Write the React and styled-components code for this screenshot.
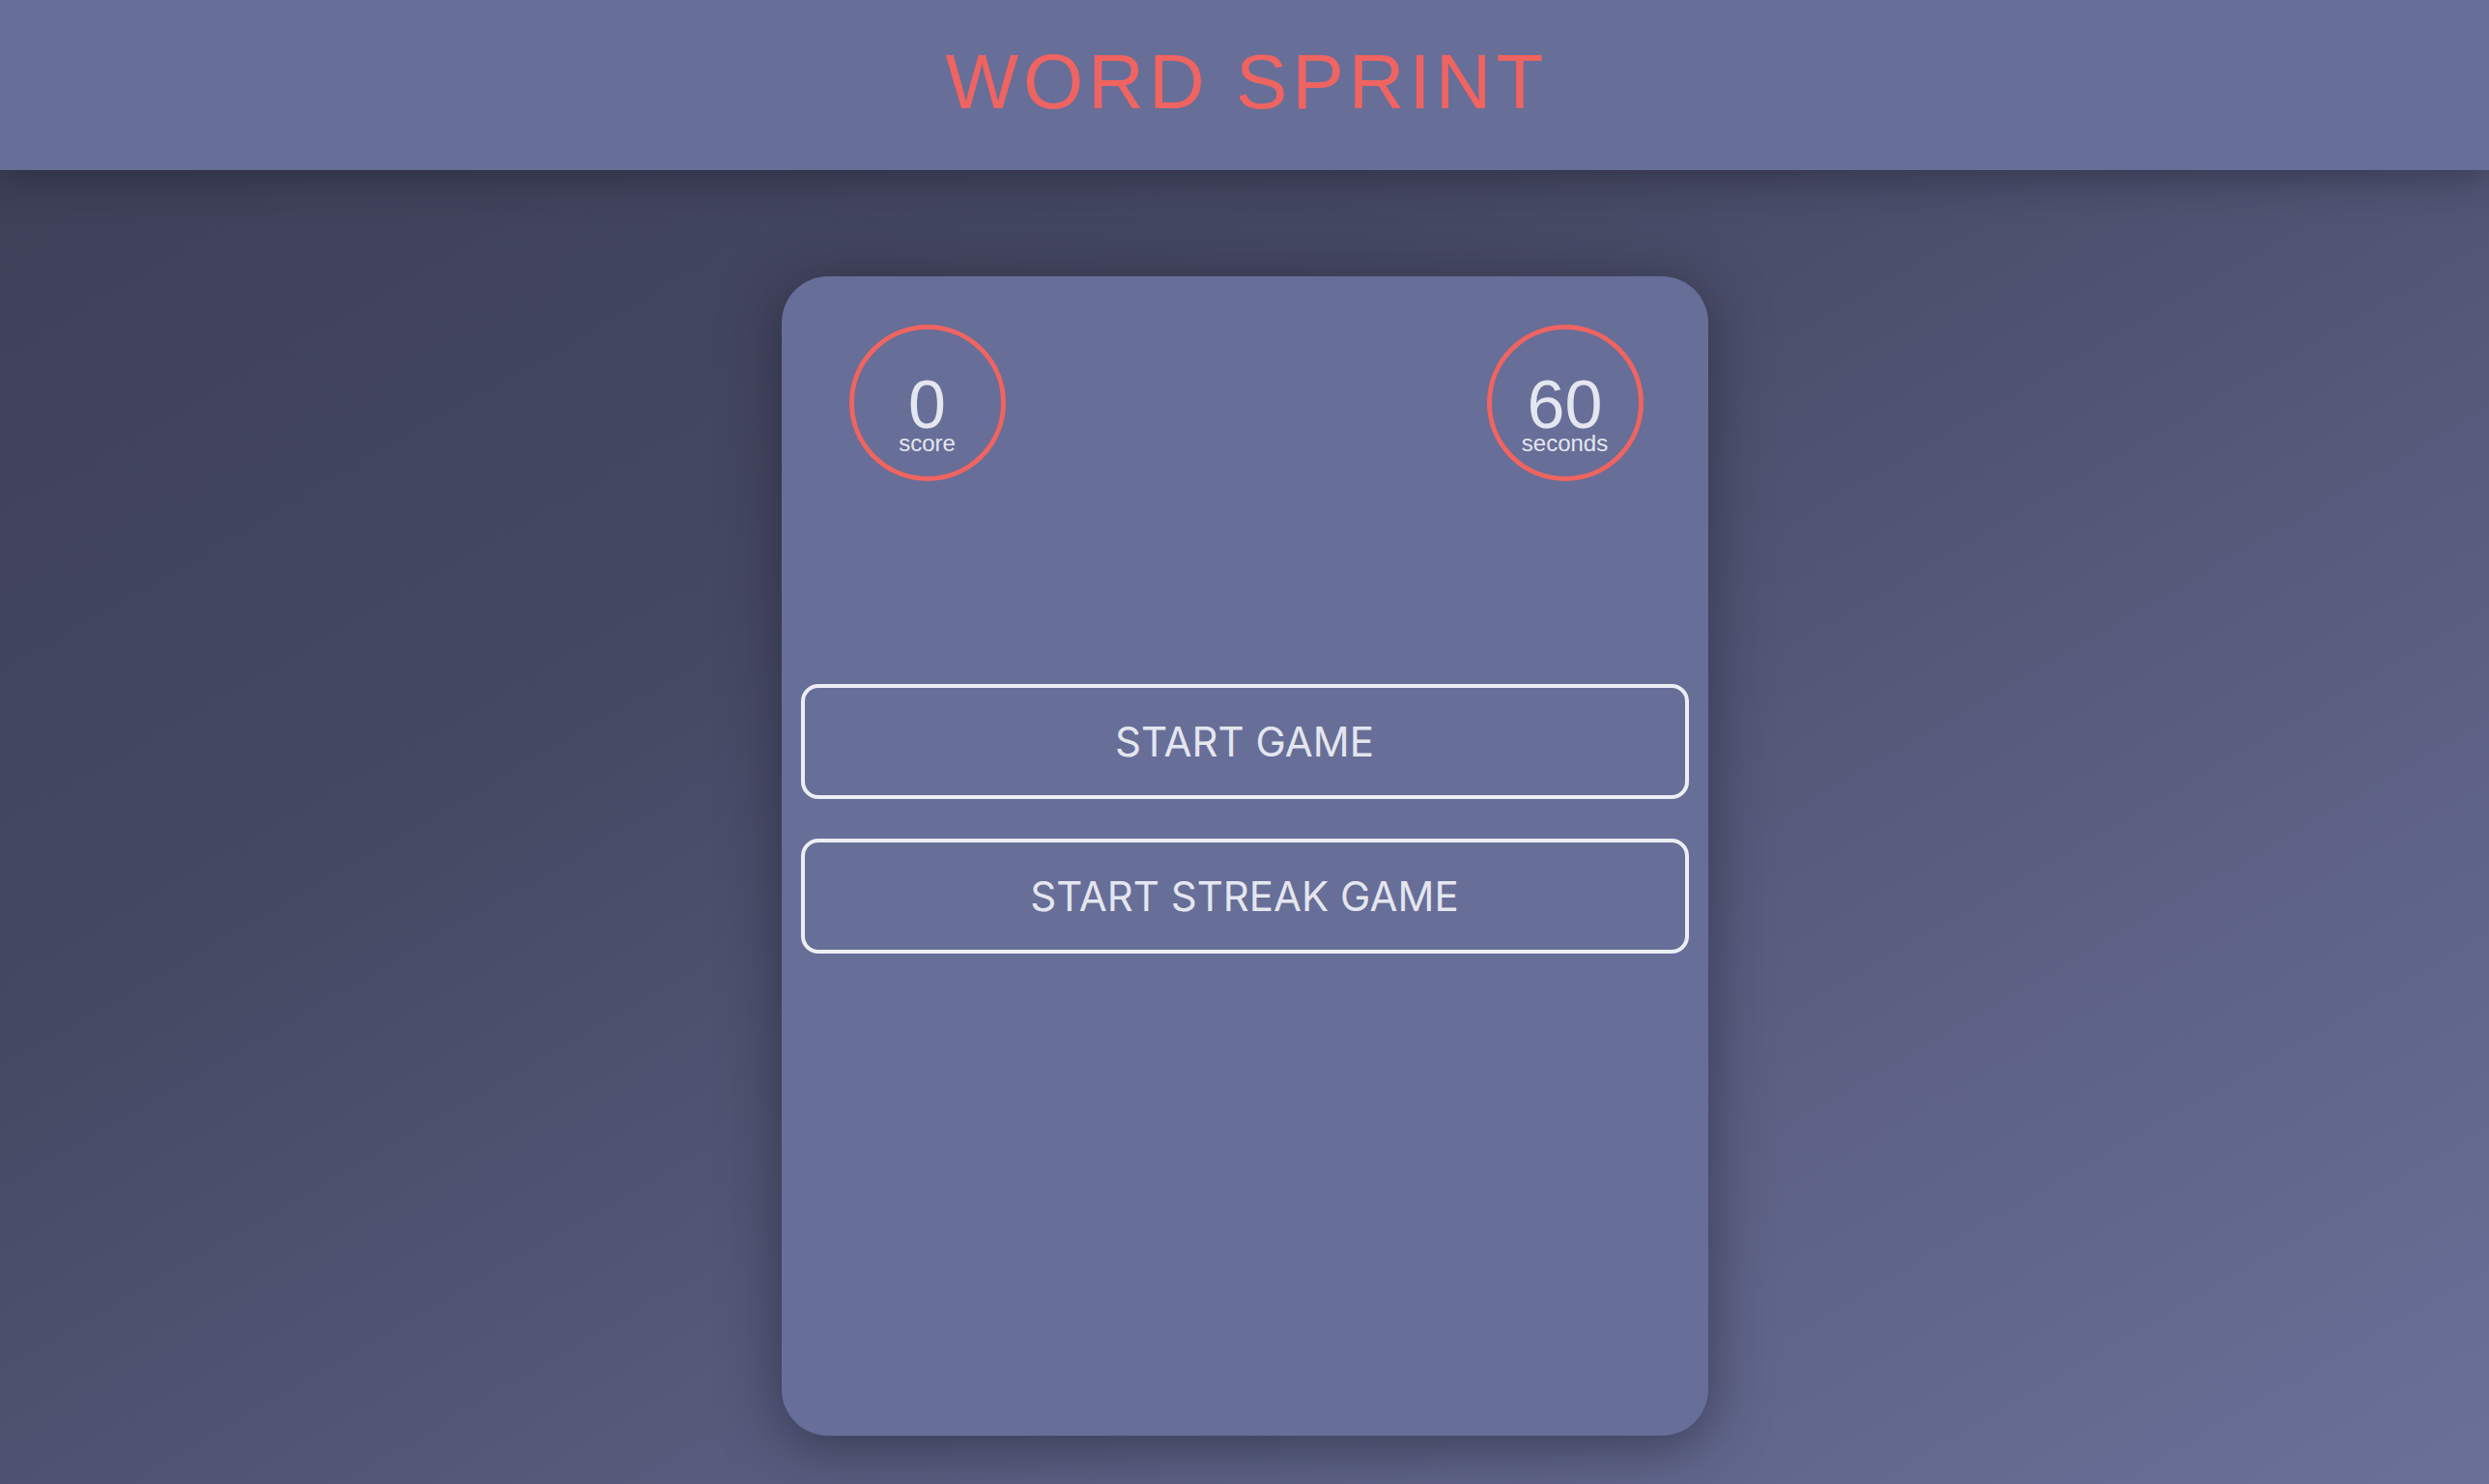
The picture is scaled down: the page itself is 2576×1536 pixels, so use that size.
import styled, { createGlobalStyle } from "styled-components";

const GlobalStyle = createGlobalStyle`
  * {
    box-sizing: border-box;
  }
  html, body {
    margin: 0;
    padding: 0;
  }
  body {
    min-height: 100vh;
    font-family: "Liberation Sans", Arial, sans-serif;
    background: linear-gradient(150deg, #3c3f56 0%, #454862 35%, #5a5f82 70%, #6a7098 100%);
    background-attachment: fixed;
  }
`;

const Page = styled.div`
  min-height: 100vh;
  display: flex;
  flex-direction: column;
`;

const Header = styled.header`
  height: 176px;
  background: #676e98;
  display: flex;
  align-items: center;
  justify-content: center;
  padding-bottom: 6px;
  box-shadow: 0 6px 40px rgba(20, 22, 35, 0.45);
  position: relative;
  z-index: 1;
`;

const Title = styled.h1`
  margin: 0 0 0 5px;
  font-family: "Liberation Sans", Arial, sans-serif;
  font-weight: 400;
  font-size: 80px;
  line-height: 1;
  letter-spacing: 5px;
  color: #ef6461;
`;

const Main = styled.main`
  display: flex;
  justify-content: center;
  padding: 110px 0 50px;
`;

const Card = styled.section`
  width: 959px;
  height: 1200px;
  background: #676e98;
  border-radius: 48px;
  padding: 50px 20px 20px;
  box-shadow: 0 10px 60px rgba(25, 27, 42, 0.55);
  display: flex;
  flex-direction: column;
`;

const StatsRow = styled.div`
  display: flex;
  justify-content: space-between;
  padding: 0 47px 0 50px;
`;

const Ring = styled.div`
  width: 162px;
  height: 162px;
  border: 5px solid #f06460;
  border-radius: 50%;
  padding-top: 28px;
  display: flex;
  flex-direction: column;
  align-items: center;
  justify-content: center;
  color: #e4e6f0;
`;

const Value = styled.div`
  font-size: 70px;
  line-height: 56px;
`;

const Label = styled.div`
  font-size: 24px;
  line-height: 24px;
`;

const Actions = styled.div`
  display: flex;
  flex-direction: column;
  gap: 41px;
  margin-top: 210px;
`;

const Button = styled.button`
  height: 119px;
  width: 100%;
  background: transparent;
  border: 4px solid #eceef6;
  border-radius: 18px;
  color: #e4e6f0;
  font-family: Inter, "Liberation Sans", sans-serif;
  font-size: 42px;
  font-weight: 400;
  cursor: pointer;
`;

export default function App() {
  return (
    <>
      <GlobalStyle />
      <Page>
        <Header>
          <Title>WORD SPRINT</Title>
        </Header>
        <Main>
          <Card>
            <StatsRow>
              <Ring>
                <Value>0</Value>
                <Label>score</Label>
              </Ring>
              <Ring>
                <Value>60</Value>
                <Label>seconds</Label>
              </Ring>
            </StatsRow>
            <Actions>
              <Button>START GAME</Button>
              <Button>START STREAK GAME</Button>
            </Actions>
          </Card>
        </Main>
      </Page>
    </>
  );
}
